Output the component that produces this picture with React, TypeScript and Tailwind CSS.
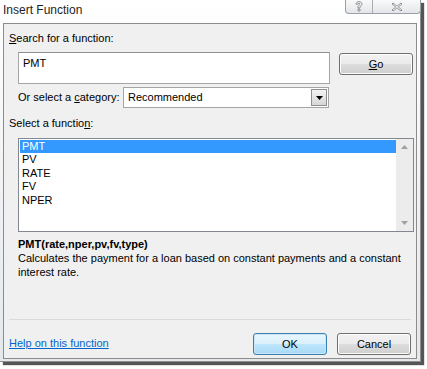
const font = "font-['Liberation_Sans',Arial,sans-serif]";

const functions = ["PMT", "PV", "RATE", "FV", "NPER"];

function WinButton({
  children,
  isDefault = false,
  className = "",
}: {
  children: React.ReactNode;
  isDefault?: boolean;
  className?: string;
}) {
  return (
    <button
      className={`h-[22px] w-[74px] rounded-[3px] border text-[11px] leading-[13px] text-black flex items-center justify-center ${
        isDefault
          ? "border-[#3c7fb1] bg-[linear-gradient(#eaf6fd_0%,#d9f0fc_50%,#bee6fd_51%,#a7d9f5_100%)] shadow-[inset_0_0_0_1px_#c8e6f8]"
          : "border-[#707070] bg-[linear-gradient(#f2f2f2_0%,#ebebeb_50%,#dddddd_51%,#cfcfcf_100%)] shadow-[inset_0_0_0_1px_#fcfcfc]"
      } ${className}`}
    >
      {children}
    </button>
  );
}

export default function App() {
  return (
    <div className={`w-[427px] h-[369px] bg-white ${font} text-[11px] leading-[13px] text-black`}>
      <div className="relative w-[421px] h-[362px] flex flex-col bg-[linear-gradient(180deg,#ffffff_0%,#f3f5f7_40%,#e4e8ec_100%)] border-r border-b border-[#8d8d8d] shadow-[3px_3px_1px_#555]">
        {/* title bar */}
        <div className="h-[23px] flex items-start justify-between">
          <span className="pl-[3px] pt-[3px] text-[12px] leading-[15px] text-[#1e1e1e]">Insert Function</span>
          <div className="flex h-[14px] mr-[-1px] rounded-b-[4px] border border-t-0 border-[#9aa0a6] bg-[linear-gradient(#f8f9fa,#e3e6e9)] overflow-hidden">
            <div className="w-[27px] flex items-center justify-center border-r border-[#a8adb3]">
              <svg width="8" height="11" viewBox="0 0 8 11">
                <path
                  d="M1 3.2 C1 1.4 2.4 0.6 4 0.6 C5.8 0.6 7 1.6 7 3 C7 4.4 5.6 4.9 5 5.5 L5 7 L3 7 L3 5.2 C3.4 4.4 5 4 5 3 C5 2.4 4.6 2.1 4 2.1 C3.3 2.1 3 2.6 3 3.2 Z M3 8 H5 V10 H3 Z"
                  fill="#fff"
                  stroke="#7a7a7a"
                  strokeWidth="0.8"
                />
              </svg>
            </div>
            <div className="w-[47px] flex items-center justify-center">
              <svg width="12" height="10" viewBox="0 0 12 10">
                <path d="M2 1 L6 4.2 L10 1 L11 2 L7.3 5 L11 8 L10 9 L6 5.8 L2 9 L1 8 L4.7 5 L1 2 Z" fill="#fff" stroke="#7a7a7a" strokeWidth="0.8" />
              </svg>
            </div>
          </div>
        </div>

        {/* client area */}
        <div className="flex-1 mx-[3px] mb-[2px] border border-[#8c8c8c] bg-[#f0f0f0] flex flex-col pl-[5px]">
          <div className="mt-[7px] h-[14px] flex items-center">
            <span><u>S</u>earch for a function:</span>
          </div>

          <div className="mt-[7px] flex items-start">
            <div className="ml-[9px] w-[312px] h-[32px] bg-white border border-[#a5a5a5] border-t-[#8e8f8f] px-[4px] pt-[4px]">
              PMT
            </div>
            <WinButton className="ml-[9px] mt-[1px] h-[21px]">
              <span><u>G</u>o</span>
            </WinButton>
          </div>

          <div className="mt-[3px] flex items-center">
            <span className="ml-[9px] w-[101px] shrink-0 whitespace-nowrap">Or select a <u>c</u>ategory:</span>
            <div className="ml-[4px] w-[206px] h-[21px] bg-white border border-[#a5a5a5] flex items-center justify-between pl-[4px] pr-[1px]">
              <span>Recommended</span>
              <div className="w-[16px] h-[17px] border border-[#8e8f8f] bg-[linear-gradient(#f3f3f3,#d6d6d6)] flex items-center justify-center">
                <svg width="7" height="4" viewBox="0 0 7 4">
                  <path d="M0 0 H7 L3.5 4 Z" fill="#000" />
                </svg>
              </div>
            </div>
          </div>

          <div className="mt-[8px] h-[14px] flex items-center">
            <span>Select a functio<u>n</u>:</span>
          </div>

          <div className="mt-[8px] ml-[9px] w-[396px] h-[94px] bg-white border border-[#828790] flex">
            <div className="flex-1 pt-[1px] pl-[1px]">
              {functions.map((f, i) => (
                <div
                  key={f}
                  className={`h-[13px] leading-[13px] pl-[2px] mb-[0.4px] ${
                    i === 0 ? "bg-[#3399ff] text-white" : "text-black"
                  }`}
                >
                  {f}
                </div>
              ))}
            </div>
            <div className="w-[17px] bg-[#ececec] flex flex-col justify-between items-center py-[6px]">
              <svg width="7" height="4" viewBox="0 0 7 4">
                <path d="M0 4 L3.5 0 L7 4 Z" fill="#a0a0a0" />
              </svg>
              <svg width="7" height="4" viewBox="0 0 7 4">
                <path d="M0 0 H7 L3.5 4 Z" fill="#a0a0a0" />
              </svg>
            </div>
          </div>

          <div className="mt-[5px] ml-[9px] font-bold h-[14px] flex items-center">
            PMT(rate,nper,pv,fv,type)
          </div>
          <div className="ml-[9px] w-[392px] leading-[14px]">
            Calculates the payment for a loan based on constant payments and a constant interest rate.
          </div>

          <div className="flex-1" />

          <div className="mr-[5px] h-px bg-[#d8dade]" />

          <div className="mt-[13px] mb-[3px] flex items-center">
            <a href="#" className="text-[#0066cc] underline mb-[2px]">
              Help on this function
            </a>
            <div className="flex-1" />
            <WinButton isDefault>OK</WinButton>
            <WinButton className="ml-[10px] mr-[5px]">Cancel</WinButton>
          </div>
        </div>
      </div>
    </div>
  );
}
